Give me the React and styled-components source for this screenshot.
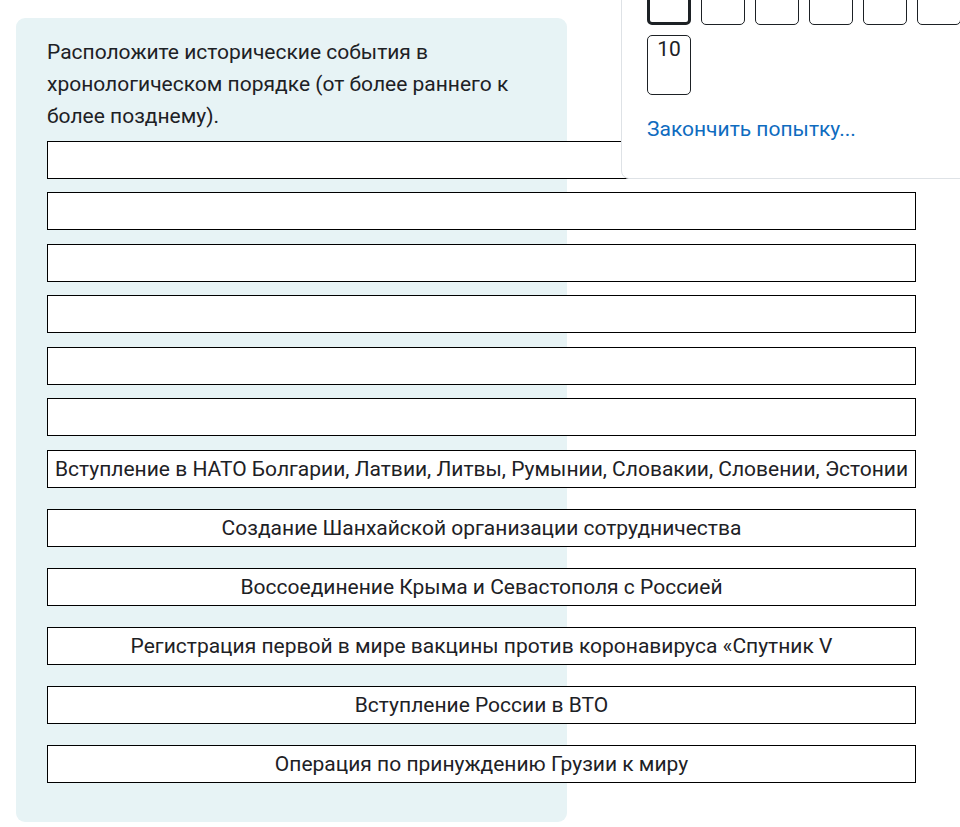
import React from "react";
import styled, { createGlobalStyle } from "styled-components";

const GlobalStyle = createGlobalStyle`
  html, body {
    margin: 0;
    padding: 0;
    background: #ffffff;
    overflow: hidden;
  }
  body {
    font-family: Roboto, "Liberation Sans", sans-serif;
    color: #1d2125;
  }
`;

const Page = styled.div`
  position: relative;
  width: 960px;
  height: 827px;
  overflow: hidden;
`;

const QuestionCard = styled.section`
  margin: 18px 0 0 16px;
  width: 551px;
  box-sizing: border-box;
  padding: 18px 31px 39px 31px;
  background: #e7f3f5;
  border-radius: 9px;
`;

const Prompt = styled.p`
  margin: 0 0 9px;
  font-size: 21px;
  line-height: 32px;
  color: #1d2125;
`;

const SlotList = styled.ul`
  list-style: none;
  margin: 0;
  padding: 0;
  display: flex;
  flex-direction: column;
  gap: ${(p) => p.$gap}px;
  width: 869px;
`;

const Slot = styled.li`
  box-sizing: border-box;
  height: 38px;
  border: 1px solid #000;
  background: #fff;
  display: flex;
  align-items: center;
  justify-content: center;
  padding: 0 7px;
  font-size: 21px;
  color: #1d2125;
  white-space: nowrap;
`;

const Spacer = styled.div`
  height: 14px;
`;

const NavPanel = styled.aside`
  position: absolute;
  top: -40px;
  left: 621px;
  width: 380px;
  box-sizing: border-box;
  padding: 4px 0 0 25px;
  height: 219px;
  background: #fff;
  border: 1px solid #dee2e6;
  border-radius: 8px;
`;

const NavGrid = styled.div`
  display: grid;
  grid-template-columns: repeat(7, 44px);
  gap: 10px;
`;

const NavButton = styled.div`
  box-sizing: border-box;
  height: 60px;
  border: ${(p) => (p.$current ? "3px solid #1d2125" : "1px solid #1d2125")};
  border-radius: 5px;
  background: #fff;
  text-align: center;
  font-size: 21px;
  line-height: 26px;
  padding-top: 0;
  color: #1d2125;
`;

const FinishLink = styled.a`
  display: inline-block;
  margin-top: 20px;
  font-size: 21px;
  line-height: 28px;
  color: #0f6cbf;
  text-decoration: none;
`;

const events = [
  "Вступление в НАТО Болгарии, Латвии, Литвы, Румынии, Словакии, Словении, Эстонии",
  "Создание Шанхайской организации сотрудничества",
  "Воссоединение Крыма и Севастополя с Россией",
  "Регистрация первой в мире вакцины против коронавируса «Спутник V",
  "Вступление России в ВТО",
  "Операция по принуждению Грузии к миру",
];

export default function App() {
  return (
    <Page>
      <GlobalStyle />
      <QuestionCard>
        <Prompt>
          Расположите исторические события в хронологическом порядке (от более раннего к более позднему).
        </Prompt>
        <SlotList $gap={13.4}>
          {Array.from({ length: 6 }).map((_, i) => (
            <Slot key={i} />
          ))}
        </SlotList>
        <Spacer />
        <SlotList $gap={21}>
          {events.map((e) => (
            <Slot key={e}>{e}</Slot>
          ))}
        </SlotList>
      </QuestionCard>
      <NavPanel>
        <NavGrid>
          {Array.from({ length: 6 }).map((_, i) => (
            <NavButton key={i} $current={i === 0} />
          ))}
          <NavButton style={{ gridColumn: 1 }}>10</NavButton>
        </NavGrid>
        <FinishLink href="#">Закончить попытку...</FinishLink>
      </NavPanel>
    </Page>
  );
}
